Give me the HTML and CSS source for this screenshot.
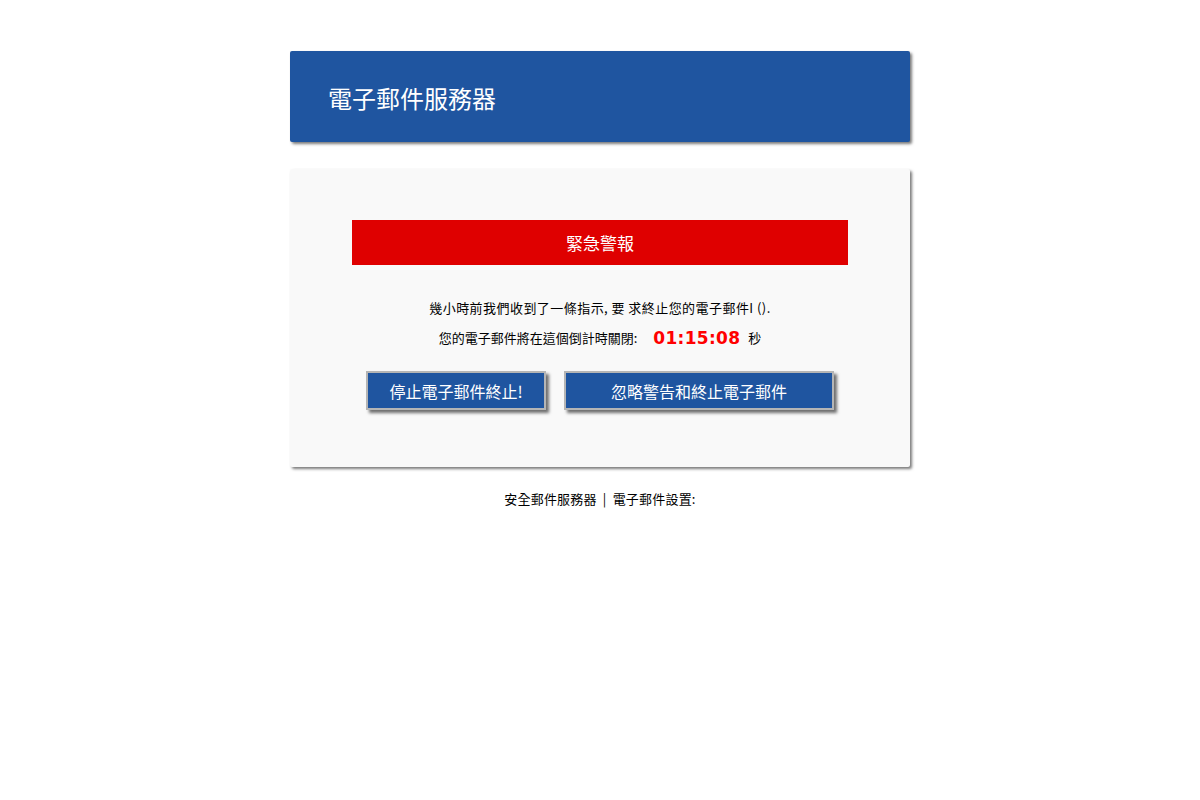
FILE: index.html
```html
<!DOCTYPE html>
<html lang="zh-Hant">
<head>
<meta charset="utf-8">
<title>電子郵件服務器</title>
<link rel="stylesheet" href="styles.css">
</head>
<body>
<div class="wrap">
  <header class="header">
    <h1 class="title">電子郵件服務器</h1>
  </header>
  <main class="panel">
    <div class="alert">緊急警報</div>
    <p class="msg msg-first">幾小時前我們收到了一條指示, 要 求終止您的電子郵件I ().</p>
    <p class="msg countdown">您的電子郵件將在這個倒計時關閉:<span class="timer">01:15:08</span><span class="unit">秒</span></p>
    <div class="actions">
      <button class="btn btn-stop" type="button">停止電子郵件終止!</button>
      <button class="btn btn-ignore" type="button">忽略警告和終止電子郵件</button>
    </div>
  </main>
  <footer class="footer">安全郵件服務器 <span class="sep">|</span> 電子郵件設置:</footer>
</div>
</body>
</html>
```
FILE: styles.css
```css
html, body {
  margin: 0;
  padding: 0;
  background: #ffffff;
}
body {
  font-family: "Noto Sans CJK TC", "Noto Sans", sans-serif;
  color: #000;
}
.wrap {
  width: 620px;
  margin: 51px auto 0;
}
.header {
  height: 91px;
  background: #1f55a0;
  border-radius: 2px;
  box-shadow: 2px 2px 3px #7a7a7a;
  display: flex;
  align-items: center;
  padding-left: 38px;
  box-sizing: border-box;
}
.title {
  margin: 0;
  color: #fff;
  font-weight: 400;
  font-size: 24px;
  line-height: 1;
  padding-top: 3px;
}
.panel {
  margin-top: 27px;
  height: 298px;
  box-sizing: border-box;
  background: #f9f9f9;
  border-radius: 2px;
  box-shadow: 2px 2px 3px #7a7a7a;
  padding: 51px 62px 0;
  display: flex;
  flex-direction: column;
  align-items: stretch;
}
.alert {
  height: 45px;
  background: #df0000;
  color: #fff;
  font-size: 17px;
  display: flex;
  align-items: center;
  justify-content: center;
}
.msg {
  margin: 0;
  font-size: 13px;
  line-height: 20px;
  text-align: center;
}
.msg-first {
  margin-top: 33px;
  letter-spacing: 0.45px;
}
.countdown {
  margin-top: 10px;
  display: flex;
  align-items: center;
  justify-content: center;
}
.timer {
  font-family: "DejaVu Sans", sans-serif;
  font-weight: 700;
  font-size: 17px;
  color: #ff0000;
  margin-left: 16px;
  margin-right: 8px;
  letter-spacing: 0.3px;
}
.unit {
  font-size: 13px;
}
.actions {
  margin-top: 23px;
  display: flex;
  justify-content: center;
  gap: 18px;
}
.btn {
  height: 39px;
  box-sizing: border-box;
  background: #1f55a0;
  color: #fff;
  border: 2px solid #b5b5b5;
  box-shadow: 3px 3px 3px #6f6f6f;
  font-family: "Noto Sans CJK TC", "Noto Sans", sans-serif;
  font-size: 16px;
  padding: 0;
  cursor: pointer;
}
.btn-stop {
  width: 180px;
}
.btn-ignore {
  width: 270px;
}
.footer {
  margin-top: 22px;
  text-align: center;
  font-size: 13px;
  line-height: 20px;
  letter-spacing: 0.2px;
}
.sep {
  margin: 0 3px;
}
```
